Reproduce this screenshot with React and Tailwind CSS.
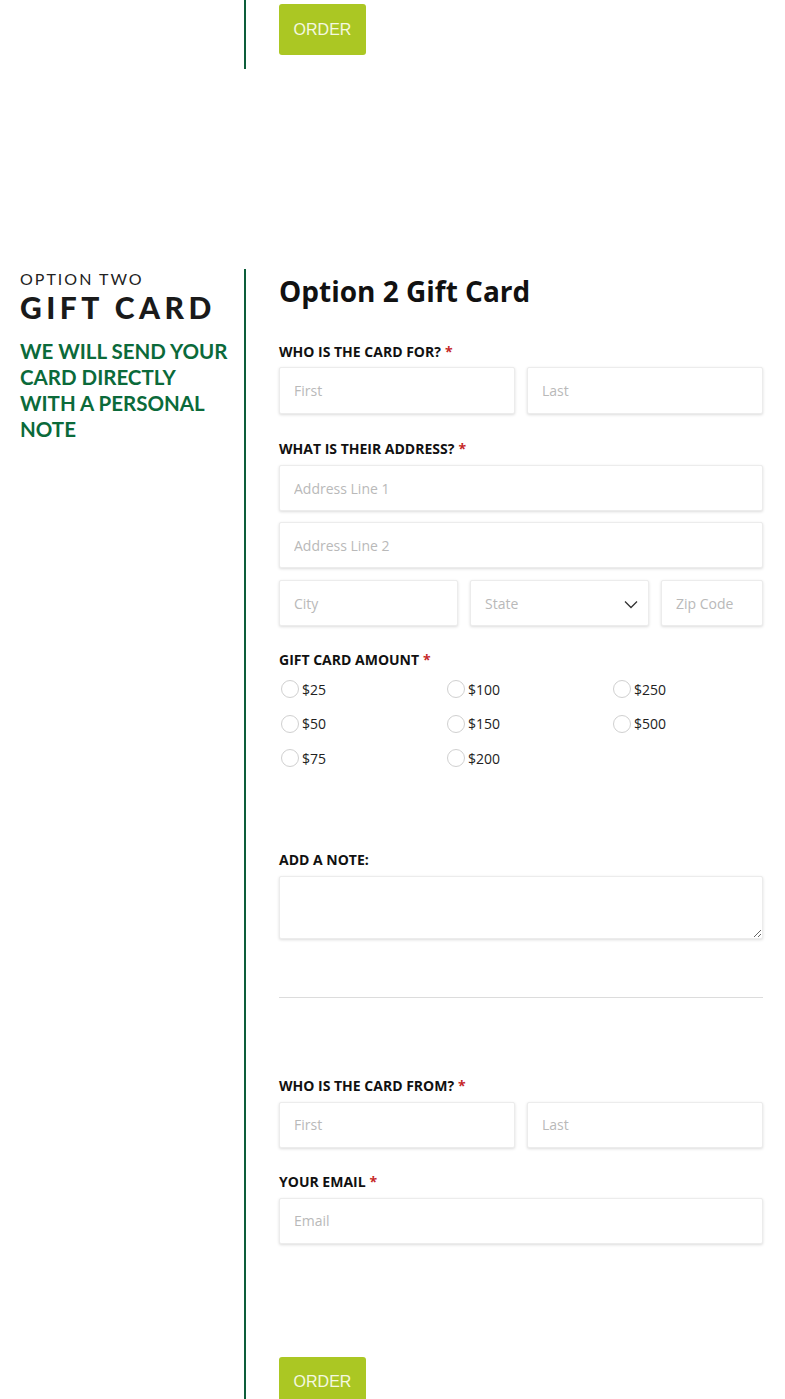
const openSans = { fontFamily: '"Open Sans", "Liberation Sans", sans-serif' };
const lato = { fontFamily: 'Lato, "Liberation Sans", sans-serif' };

function Label({ text, required, className = "" }) {
  return (
    <div
      className={`text-[14px] leading-[20px] font-bold uppercase text-[#111] ${className}`}
      style={openSans}
    >
      {text}
      {required && <span className="text-[#c62828] ml-[4px]">*</span>}
    </div>
  );
}

function Field({ placeholder, className = "" }) {
  return (
    <input
      placeholder={placeholder}
      className={`block h-[46px] w-full min-w-0 rounded-[2px] border border-[#ececec] bg-white px-[14px] text-[14px] text-[#333] placeholder:text-[#b9b9b9] shadow-[0_1px_3px_rgba(0,0,0,0.14)] outline-none ${className}`}
      style={openSans}
    />
  );
}

function OrderButton() {
  return (
    <button
      className="h-[51px] w-[87px] rounded-[3px] bg-[#abc723] text-[16px] text-[#f4f8e0]"
      style={{ fontFamily: '"Liberation Sans", Arial, sans-serif' }}
    >
      ORDER
    </button>
  );
}

function Radio({ label }) {
  return (
    <label className="flex h-[34.5px] items-center gap-[3px]">
      <span className="ml-[2px] h-[18px] w-[18px] rounded-full border border-[#d0d0d0] bg-white" />
      <span className="text-[14px] text-[#222]" style={openSans}>
        {label}
      </span>
    </label>
  );
}

export default function App() {
  const amounts = ["$25", "$100", "$250", "$50", "$150", "$500", "$75", "$200"];

  return (
    <div className="w-[785px] bg-white">
      {/* option one tail */}
      <div className="flex h-[69px]">
        <div className="w-[246px] shrink-0 border-r-2 border-[#0d5e3b]" />
        <div className="pl-[33px] pt-[4px]">
          <OrderButton />
        </div>
      </div>

      <div className="h-[200px]" />

      {/* option two */}
      <div className="flex">
        <div className="w-[246px] shrink-0 border-r-2 border-[#0d5e3b] pl-[20px]">
          <div
            className="text-[16px] leading-[20px] tracking-[2px] text-[#222]"
            style={lato}
          >
            OPTION TWO
          </div>
          <div
            className="text-[30px] leading-[36px] font-black tracking-[4.5px] text-[#1a1a1a]"
            style={lato}
          >
            GIFT CARD
          </div>
          <div
            className="mt-[13px] w-[210px] text-[20.5px] leading-[26px] font-bold text-[#0b6a3a]"
            style={lato}
          >
            WE WILL SEND YOUR CARD DIRECTLY WITH A PERSONAL NOTE
          </div>
        </div>

        <div className="w-[484px] shrink-0 pl-[33px] box-content pb-[10px]">
          <h2
            className="mt-[3px] text-[28px] leading-[38px] font-bold text-[#111]"
            style={openSans}
          >
            Option 2 Gift Card
          </h2>

          <Label text="Who is the card for?" required className="mt-[32px]" />
          <div className="mt-[5px] grid grid-cols-2 gap-[12px]">
            <Field placeholder="First" className="h-[47px]" />
            <Field placeholder="Last" className="h-[47px]" />
          </div>

          <Label text="What is their address?" required className="mt-[25px]" />
          <Field placeholder="Address Line 1" className="mt-[6px]" />
          <Field placeholder="Address Line 2" className="mt-[11px]" />
          <div className="mt-[12px] grid grid-cols-[179px_179px_102px] gap-[12px]">
            <Field placeholder="City" />
            <div className="relative">
              <Field placeholder="State" />
              <svg
                className="absolute right-[11px] top-[20px]"
                width="14"
                height="9"
                viewBox="0 0 14 9"
                fill="none"
              >
                <polyline
                  points="1,1.5 7,7.5 13,1.5"
                  stroke="#333"
                  strokeWidth="1.3"
                />
              </svg>
            </div>
            <Field placeholder="Zip Code" />
          </div>

          <Label text="Gift card amount" required className="mt-[24px]" />
          <div className="mt-[2px] grid grid-cols-[166px_166px_152px]">
            {amounts.map((a) => (
              <Radio key={a} label={a} />
            ))}
          </div>

          <Label text="Add a note:" className="mt-[74px]" />
          <textarea
            className="mt-[6px] block h-[63px] w-full rounded-[2px] border border-[#ececec] bg-white shadow-[0_1px_3px_rgba(0,0,0,0.14)] outline-none"
          />

          <div className="mt-[58px] h-px bg-[#dcdcdc]" />

          <Label text="Who is the card from?" required className="mt-[78px]" />
          <div className="mt-[6px] grid grid-cols-2 gap-[12px]">
            <Field placeholder="First" />
            <Field placeholder="Last" />
          </div>

          <Label text="Your email" required className="mt-[24px]" />
          <Field placeholder="Email" className="mt-[6px]" />

          <div className="mt-[113px]">
            <OrderButton />
          </div>
        </div>
      </div>
    </div>
  );
}
